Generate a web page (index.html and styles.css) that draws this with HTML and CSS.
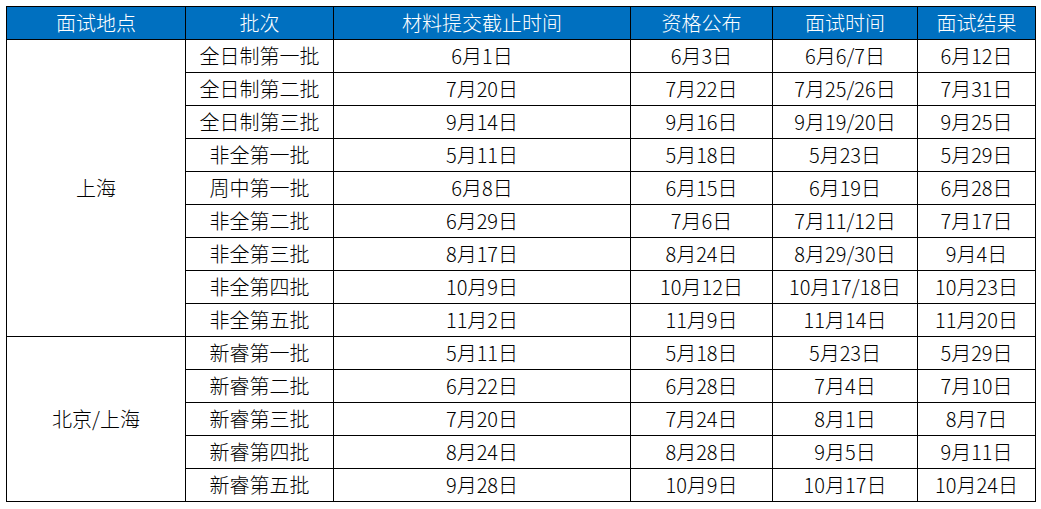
FILE: index.html
```html
<!DOCTYPE html>
<html lang="zh">
<head>
<meta charset="utf-8">
<link rel="stylesheet" href="styles.css">
</head>
<body>
<table class="schedule">
  <colgroup>
    <col class="c1"><col class="c2"><col class="c3"><col class="c4"><col class="c5"><col class="c6">
  </colgroup>
  <thead>
    <tr><th>面试地点</th><th>批次</th><th>材料提交截止时间</th><th>资格公布</th><th>面试时间</th><th>面试结果</th></tr>
  </thead>
  <tbody>
    <tr><td rowspan="9">上海</td><td>全日制第一批</td><td>6月1日</td><td>6月3日</td><td>6月6/7日</td><td>6月12日</td></tr>
    <tr><td>全日制第二批</td><td>7月20日</td><td>7月22日</td><td>7月25/26日</td><td>7月31日</td></tr>
    <tr><td>全日制第三批</td><td>9月14日</td><td>9月16日</td><td>9月19/20日</td><td>9月25日</td></tr>
    <tr><td>非全第一批</td><td>5月11日</td><td>5月18日</td><td>5月23日</td><td>5月29日</td></tr>
    <tr><td>周中第一批</td><td>6月8日</td><td>6月15日</td><td>6月19日</td><td>6月28日</td></tr>
    <tr><td>非全第二批</td><td>6月29日</td><td>7月6日</td><td>7月11/12日</td><td>7月17日</td></tr>
    <tr><td>非全第三批</td><td>8月17日</td><td>8月24日</td><td>8月29/30日</td><td>9月4日</td></tr>
    <tr><td>非全第四批</td><td>10月9日</td><td>10月12日</td><td>10月17/18日</td><td>10月23日</td></tr>
    <tr><td>非全第五批</td><td>11月2日</td><td>11月9日</td><td>11月14日</td><td>11月20日</td></tr>
    <tr><td rowspan="5">北京/上海</td><td>新睿第一批</td><td>5月11日</td><td>5月18日</td><td>5月23日</td><td>5月29日</td></tr>
    <tr><td>新睿第二批</td><td>6月22日</td><td>6月28日</td><td>7月4日</td><td>7月10日</td></tr>
    <tr><td>新睿第三批</td><td>7月20日</td><td>7月24日</td><td>8月1日</td><td>8月7日</td></tr>
    <tr><td>新睿第四批</td><td>8月24日</td><td>8月28日</td><td>9月5日</td><td>9月11日</td></tr>
    <tr><td>新睿第五批</td><td>9月28日</td><td>10月9日</td><td>10月17日</td><td>10月24日</td></tr>
  </tbody>
</table>
</body>
</html>
```
FILE: styles.css
```css
html, body {
  margin: 0;
  padding: 0;
  background: #ffffff;
}
body {
  padding: 6px;
  font-family: "Noto Sans CJK SC", "Noto Sans", sans-serif;
}
.schedule {
  border-collapse: collapse;
  table-layout: fixed;
  width: 1030px;
  font-size: 20px;
  font-weight: 300;
  color: #000000;
}
.c1 { width: 179px; }
.c2 { width: 148px; }
.c3 { width: 297px; }
.c4 { width: 142px; }
.c5 { width: 145px; }
.c6 { width: 118px; }
.schedule th,
.schedule td {
  border: 1px solid #000000;
  padding: 0;
  height: 32px;
  text-align: center;
  vertical-align: middle;
  line-height: 20px;
  white-space: nowrap;
}
.schedule th {
  background: #0070c0;
  color: #ffffff;
  font-weight: 300;
}
```
